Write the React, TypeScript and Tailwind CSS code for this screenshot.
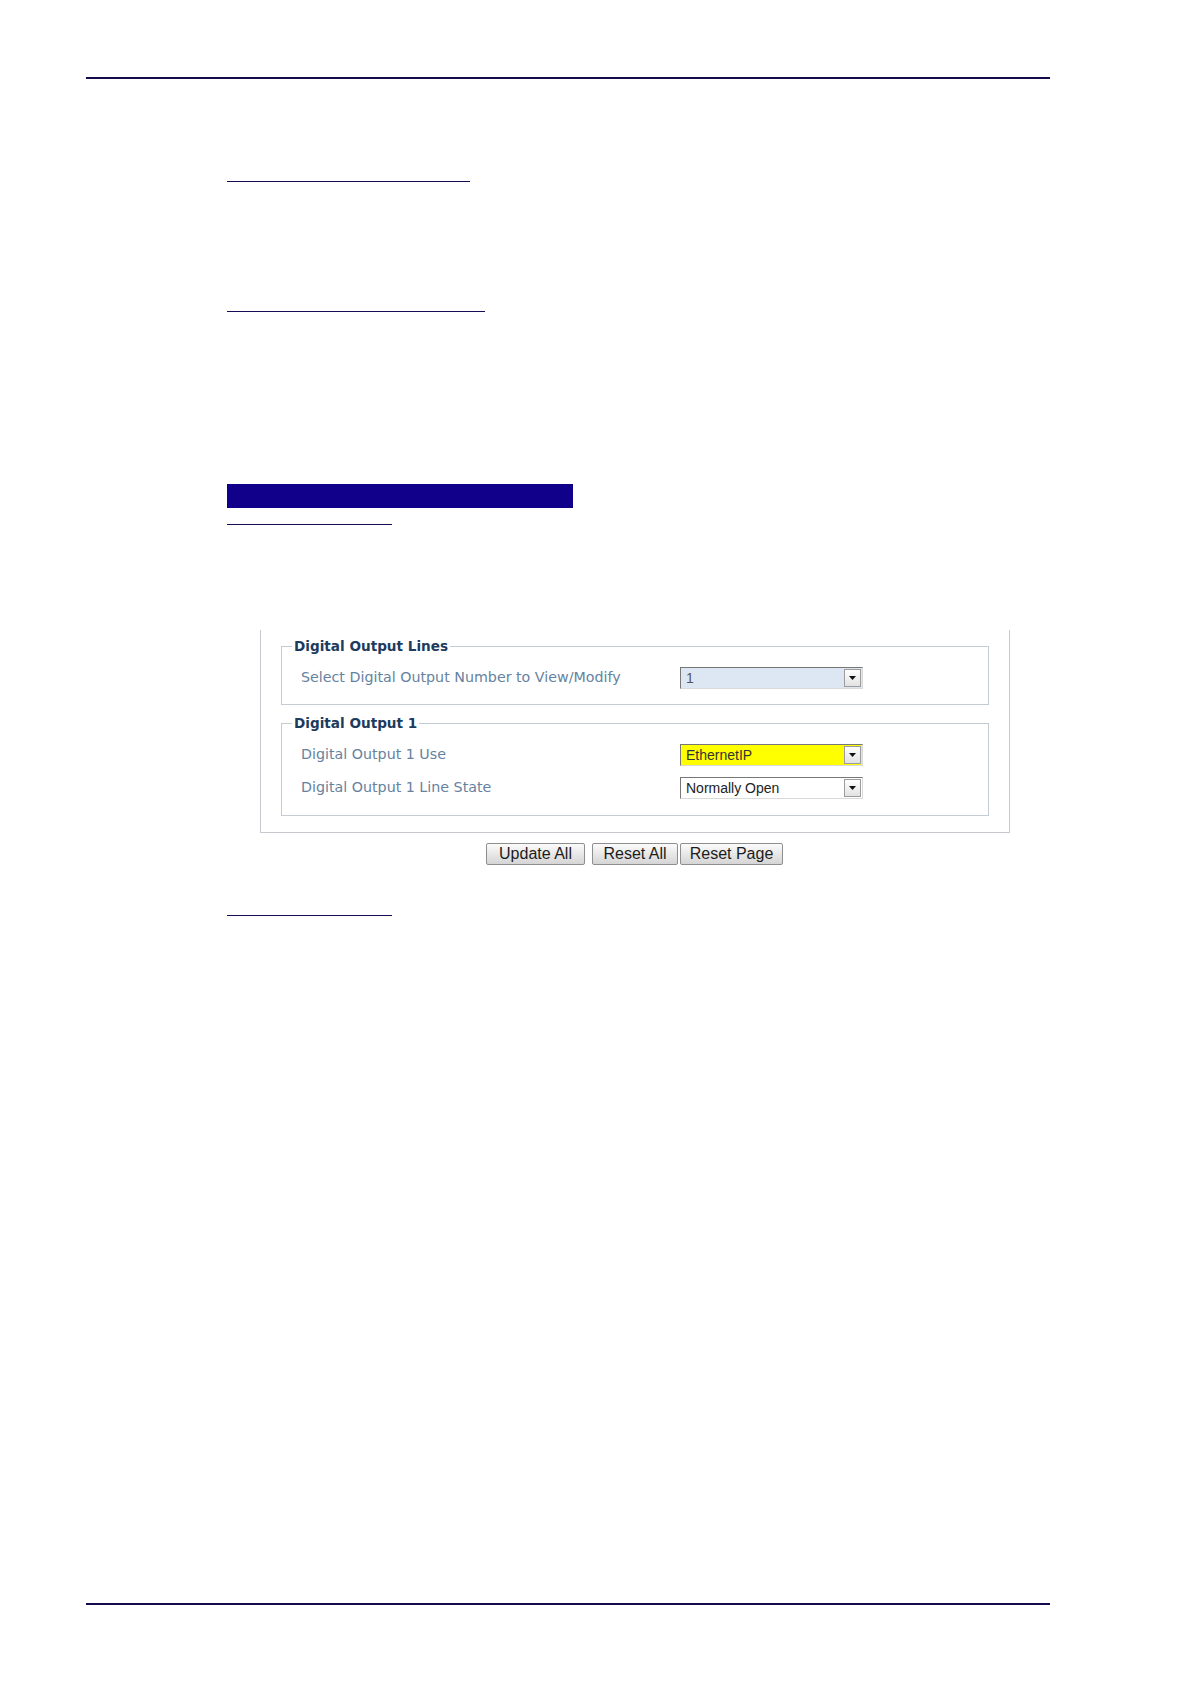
const labelFont = "font-['DejaVu_Sans',Verdana,sans-serif]";
const ctrlFont = "font-['Liberation_Sans',Arial,sans-serif]";

function Arrow() {
  return (
    <div className="w-[17px] h-[18px] mr-px flex items-center justify-center border border-[#9c9c9c] bg-linear-to-b from-white to-[#e2e2e2]">
      <svg width="7" height="4" viewBox="0 0 7 4">
        <path d="M0 0h7L3.5 4z" fill="#111" />
      </svg>
    </div>
  );
}

function Select({ value, tone }: { value: string; tone: string }) {
  return (
    <div
      className={`flex items-center w-[183px] h-[22px] border border-t-[#777] border-l-[#777] border-b-[#dadada] border-r-[#dadada] ${tone}`}
    >
      <span className={`flex-1 pl-[5px] text-[14px] leading-none ${ctrlFont}`}>{value}</span>
      <Arrow />
    </div>
  );
}

function Row({ label, value, tone, className = '' }: { label: string; value: string; tone: string; className?: string }) {
  return (
    <div className={`flex items-center ${className}`}>
      <div className={`w-[388px] pl-[9px] text-[14.25px] text-[#6682a0] ${labelFont}`}>{label}</div>
      <Select value={value} tone={tone} />
    </div>
  );
}

function Group({ title, children, className = '' }: { title: string; children: React.ReactNode; className?: string }) {
  return (
    <fieldset className={`border border-[#c3ccd4] pl-[10px] ${className}`}>
      <legend className={`px-[2px] text-[13.6px] leading-[16px] font-bold text-[#1d3b5e] ${labelFont}`}>{title}</legend>
      {children}
    </fieldset>
  );
}

export default function App() {
  return (
    <div className="w-[1190px] h-[1684px] bg-white flex flex-col items-start overflow-hidden">
      <div className="mt-[77px] ml-[86px] w-[964px] h-[2px] bg-[#150a4c]" />

      <div className="mt-[102px] ml-[227px] w-[243px] h-px bg-[#1a0a55]" />
      <div className="mt-[129px] ml-[227px] w-[258px] h-px bg-[#1a0a55]" />

      <div className="mt-[172px] ml-[227px] w-[346px] h-[24px] bg-[#10008a]" />
      <div className="mt-[16px] ml-[227px] w-[165px] h-px bg-[#1a0a55]" />

      {/* captured web page panel */}
      <div className="mt-[105px] ml-[260px] w-[750px] border-l border-r border-b border-[#c6cacf] pt-[8px] px-[20px] pb-[16px]">
        <Group title="Digital Output Lines" className="pb-[15px]">
          <Row className="mt-[13px]" label="Select Digital Output Number to View/Modify" value="1" tone="bg-[#dde7f3] text-[#555]" />
        </Group>
        <Group title="Digital Output 1" className="mt-[10px] pb-[16px]">
          <Row className="mt-[13px]" label="Digital Output 1 Use" value="EthernetIP" tone="bg-[#ffff00] text-[#333]" />
          <Row className="mt-[11px]" label="Digital Output 1 Line State" value="Normally Open" tone="bg-white text-[#222]" />
        </Group>
      </div>

      <div className={`mt-[10px] ml-[486px] flex items-center text-[16px] text-[#1c1c1c] ${ctrlFont}`}>
        <button className="w-[99px] h-[22px] leading-none border border-[#8e8e8e] rounded-[2px] bg-linear-to-b from-[#fbfbfb] to-[#d5d5d5]">
          Update All
        </button>
        <button className="ml-[7px] w-[86px] h-[22px] leading-none border border-[#8e8e8e] rounded-[2px] bg-linear-to-b from-[#fbfbfb] to-[#d5d5d5]">
          Reset All
        </button>
        <button className="ml-[2px] w-[103px] h-[22px] leading-none border border-[#8e8e8e] rounded-[2px] bg-linear-to-b from-[#fbfbfb] to-[#d5d5d5]">
          Reset Page
        </button>
      </div>

      <div className="mt-[50px] ml-[227px] w-[165px] h-px bg-[#1a0a55]" />

      <div className="mt-[687px] ml-[86px] w-[964px] h-[2px] bg-[#150a4c]" />
    </div>
  );
}
